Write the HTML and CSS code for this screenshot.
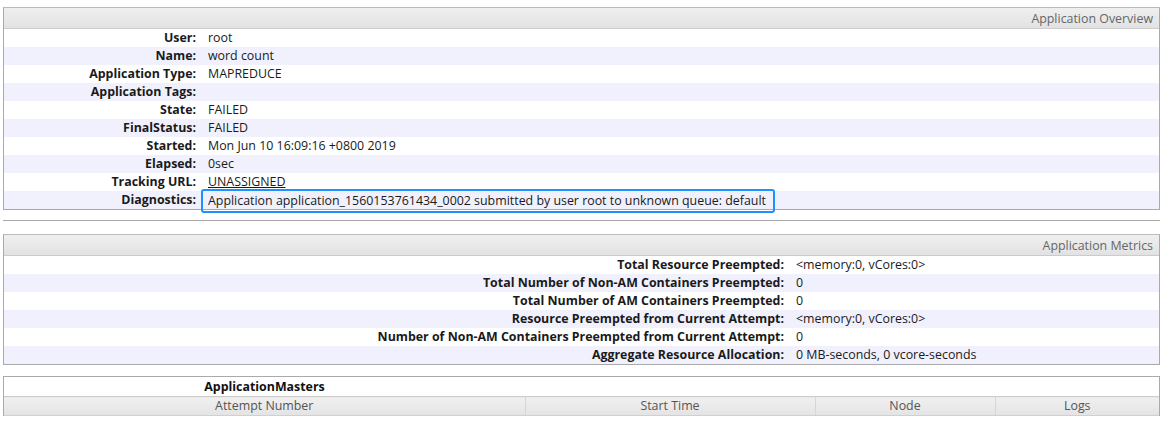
FILE: index.html
```html
<!DOCTYPE html>
<html>
<head>
<meta charset="utf-8">
<title>Application</title>
<link rel="stylesheet" href="styles.css">
</head>
<body>
<div class="info-wrap">
  <table class="info overview">
    <colgroup><col class="ov-label"><col></colgroup>
    <thead>
      <tr><th colspan="2" class="title">Application Overview</th></tr>
    </thead>
    <tbody>
      <tr><th>User:</th><td>root</td></tr>
      <tr class="alt"><th>Name:</th><td>word count</td></tr>
      <tr><th>Application Type:</th><td>MAPREDUCE</td></tr>
      <tr class="alt"><th>Application Tags:</th><td></td></tr>
      <tr><th>State:</th><td>FAILED</td></tr>
      <tr class="alt"><th>FinalStatus:</th><td>FAILED</td></tr>
      <tr><th>Started:</th><td>Mon Jun 10 16:09:16 +0800 2019</td></tr>
      <tr class="alt"><th>Elapsed:</th><td>0sec</td></tr>
      <tr><th>Tracking URL:</th><td><a class="link" href="#">UNASSIGNED</a></td></tr>
      <tr class="alt"><th>Diagnostics:</th><td class="diag-cell"><span class="diag">Application application_1560153761434_0002 submitted by user root to unknown queue: default</span></td></tr>
    </tbody>
  </table>
</div>
<hr class="sep">
<div class="info-wrap metrics-wrap">
  <table class="info metrics">
    <colgroup><col class="mt-label"><col></colgroup>
    <thead>
      <tr><th colspan="2" class="title">Application Metrics</th></tr>
    </thead>
    <tbody>
      <tr><th>Total Resource Preempted:</th><td>&lt;memory:0, vCores:0&gt;</td></tr>
      <tr class="alt"><th>Total Number of Non-AM Containers Preempted:</th><td>0</td></tr>
      <tr><th>Total Number of AM Containers Preempted:</th><td>0</td></tr>
      <tr class="alt"><th>Resource Preempted from Current Attempt:</th><td>&lt;memory:0, vCores:0&gt;</td></tr>
      <tr><th>Number of Non-AM Containers Preempted from Current Attempt:</th><td>0</td></tr>
      <tr class="alt"><th>Aggregate Resource Allocation:</th><td>0 MB-seconds, 0 vcore-seconds</td></tr>
    </tbody>
  </table>
</div>
<div class="masters-wrap">
  <table class="masters">
    <colgroup><col class="c1"><col class="c2"><col class="c3"><col></colgroup>
    <thead>
      <tr class="cap-row"><th class="cap">ApplicationMasters</th><th colspan="3" class="cap-rest"></th></tr>
      <tr class="head-row">
        <th>Attempt Number</th>
        <th>Start Time</th>
        <th>Node</th>
        <th>Logs</th>
      </tr>
    </thead>
  </table>
</div>
</body>
</html>
```

FILE: styles.css
```css
html, body {
  margin: 0;
  padding: 0;
  background: #fff;
}
body {
  padding: 7px 2px 0 3px;
  font-family: "Open Sans", "Noto Sans", "DejaVu Sans", sans-serif;
  font-size: 12.4px;
  color: #1a1a1a;
}
.info-wrap {
  border: 1px solid #aaa;
  border-top-color: #bbb;
}
table {
  border-collapse: collapse;
  width: 100%;
  table-layout: fixed;
}
.ov-label { width: 196px; }
.mt-label { width: 784px; }
.c1 { width: 521px; }
.c2 { width: 290px; }
.c3 { width: 180px; }
.info th.title {
  height: 19px;
  padding: 1px 6px 0 0;
  text-align: right;
  font-weight: normal;
  color: #666;
  background: linear-gradient(#efefef, #e9e9e9 50%, #e2e2e2);
  border-bottom: 1px solid #ccc;
  line-height: 19px;
}
.info tbody th {
  text-align: right;
  font-weight: bold;
  color: #1a1a1a;
  padding: 0 4px 0 0;
  height: 18px;
  line-height: 18px;
  white-space: nowrap;
}
.info tbody td {
  padding: 0 0 0 8px;
  height: 18px;
  line-height: 18px;
  color: #1a1a1a;
  white-space: nowrap;
}
.info tr.alt th, .info tr.alt td {
  background: #f1f1fd;
}
.link {
  color: #1a1a1a;
  text-decoration: underline;
}
.info tbody td.diag-cell {
  padding-left: 1px;
}
.diag {
  display: inline-block;
  vertical-align: top;
  border: 2px solid #1e90ff;
  border-radius: 3px;
  padding: 1px 7px 1px 5px;
  line-height: 18px;
  margin: -2px 0 -6px 0;
  position: relative;
}
.sep {
  margin: 10px 0 13px 0;
  border: 0;
  border-top: 1px solid #aaa;
  height: 0;
}
.metrics-wrap {
  margin-bottom: 11px;
}
.masters-wrap {
  border: 1px solid #aaa;
  border-bottom: 0;
}
.masters th {
  font-weight: normal;
  padding: 0;
}
.cap-row th {
  height: 18px;
  padding-top: 1px;
  line-height: 18px;
  background: #fff;
  border-bottom: 1px solid #ccc;
}
.masters th.cap {
  font-weight: bold;
  color: #111;
  text-align: center;
}
.head-row th {
  height: 18px;
  line-height: 18px;
  color: #555;
  text-align: center;
  background: linear-gradient(#f0f0f0, #eaeaea 50%, #e3e3e3);
  border-right: 1px solid #d6d6d6;
  border-bottom: 1px solid #d0d0d0;
}
.head-row th:last-child { border-right: 0; }
```
